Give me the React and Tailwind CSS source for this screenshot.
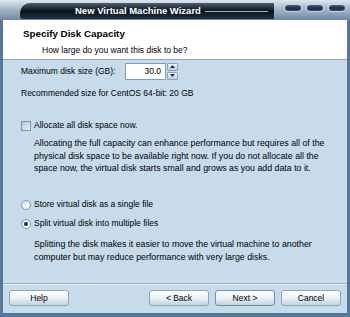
import React from "react";

function Capsule() {
  return (
    <div className="h-[8px] w-[18px] rounded-full border border-[#c8d6e4] bg-gradient-to-b from-[#4a6784] via-[#1a2f47] to-[#2e4a68]" />
  );
}

function TitleBar() {
  return (
    <div className="flex h-[20px] w-full bg-gradient-to-b from-[#dfe7ee] via-[#9fb3c6] to-[#6f88a2]">
      <div className="w-[20px]" />
      <div className="relative flex flex-1 items-center mt-[3px] mb-[1px] rounded-tl-[10px] rounded-bl-[3px] bg-gradient-to-b from-[#4c6073] via-[#0d151d] to-[#1f3143]">
        <div className="ml-[55px] text-[9.5px] font-bold leading-none text-white">
          New Virtual Machine Wizard
        </div>
        <div className="ml-[4px] mr-[6px] mt-[1px] h-[1px] flex-1 bg-[#9fb4c8]" />
      </div>
      <div className="flex w-[76px] items-center gap-[4px] pl-[10px] pb-[4px]">
        <Capsule />
        <Capsule />
        <Capsule />
      </div>
    </div>
  );
}

function Button({ children, def }) {
  return (
    <div
      className={
        "flex h-[16px] w-[60px] items-center justify-center rounded-[3px] border text-[8.5px] text-black bg-gradient-to-b from-[#ffffff] via-[#edf2f7] to-[#c3d2e0] " +
        (def ? "border-[#6e8fb6]" : "border-[#8ea4ba]")
      }
    >
      {children}
    </div>
  );
}

function Radio({ checked }) {
  return (
    <div className="flex h-[10px] w-[10px] items-center justify-center rounded-full border border-[#7f96ac] bg-gradient-to-br from-[#dfe6ee] to-[#ffffff]">
      {checked && <div className="h-[4px] w-[4px] rounded-full bg-[#1f2d3a]" />}
    </div>
  );
}

export default function App() {
  return (
    <div
      className="flex h-[317px] w-[350px] flex-col overflow-hidden bg-[#4a6c92] text-black whitespace-nowrap"
      style={{ fontFamily: '"Liberation Sans", Arial, sans-serif' }}
    >
      <TitleBar />
      <div className="flex flex-1 flex-col border-x-[3px] border-b-[4px] border-[#557799]">
        <div className="h-[40px] bg-white border-b border-[#8fa5b8] pl-[20px] pt-[8px]">
          <div className="text-[9.8px] font-bold leading-[12px]">Specify Disk Capacity</div>
          <div className="mt-[4px] pl-[19px] text-[8.5px] leading-[12px]">How large do you want this disk to be?</div>
        </div>
        <div className="flex flex-1 flex-col bg-[#c7dbeb] text-[8.5px] leading-[13px]">
          <div className="pl-[18px]">
            <div className="mt-[2px] flex h-[18px] items-center">
              <div className="w-[104px]">Maximum disk size (GB):</div>
              <div className="flex h-[17px] w-[41px] items-center justify-end border border-[#7f9db9] bg-white pr-[4px]">
                30.0
              </div>
              <div className="ml-[1px] flex h-[17px] w-[11px] flex-col gap-[1px]">
                <div className="flex flex-1 items-center justify-center rounded-[1px] border border-[#8aa2ba] bg-gradient-to-b from-[#f4f8fc] to-[#b9cbdd]">
                  <svg width="5" height="3" viewBox="0 0 5 3"><path d="M0 3 L2.5 0 L5 3 Z" fill="#1b2b3b" /></svg>
                </div>
                <div className="flex flex-1 items-center justify-center rounded-[1px] border border-[#8aa2ba] bg-gradient-to-b from-[#f4f8fc] to-[#b9cbdd]">
                  <svg width="5" height="3" viewBox="0 0 5 3"><path d="M0 0 L2.5 3 L5 0 Z" fill="#1b2b3b" /></svg>
                </div>
              </div>
            </div>
            <div className="mt-[7px]">Recommended size for CentOS 64-bit: 20 GB</div>

            <div className="mt-[19px] flex items-center gap-[3px]">
              <div className="h-[10px] w-[10px] border border-[#7c93aa] bg-gradient-to-br from-[#b8c6d4] to-[#eef2f6]" />
              <div>Allocate all disk space now.</div>
            </div>
            <div className="mt-[5px] pl-[13px] text-[8.8px] leading-[12.7px]">
              <div>Allocating the full capacity can enhance performance but requires all of the</div>
              <div>physical disk space to be available right now. If you do not allocate all the</div>
              <div>space now, the virtual disk starts small and grows as you add data to it.</div>
            </div>

            <div className="mt-[23px] flex items-center gap-[3px]">
              <Radio />
              <div>Store virtual disk as a single file</div>
            </div>
            <div className="mt-[6px] flex items-center gap-[3px]">
              <Radio checked />
              <div>Split virtual disk into multiple files</div>
            </div>
            <div className="mt-[8px] pl-[13px] text-[8.8px] leading-[12.5px]">
              <div>Splitting the disk makes it easier to move the virtual machine to another</div>
              <div>computer but may reduce performance with very large disks.</div>
            </div>
          </div>

          <div className="mt-auto">
            <div className="h-[1px] bg-[#9bb1c6]" />
            <div className="h-[1px] bg-[#e6eff7]" />
            <div className="flex items-center px-[6px] pt-[5px] pb-[7px]">
              <Button>Help</Button>
              <div className="flex-1" />
              <div className="flex gap-[6px]">
                <Button>&lt; Back</Button>
                <Button def>Next &gt;</Button>
                <Button>Cancel</Button>
              </div>
            </div>
          </div>
        </div>
      </div>
    </div>
  );
}
